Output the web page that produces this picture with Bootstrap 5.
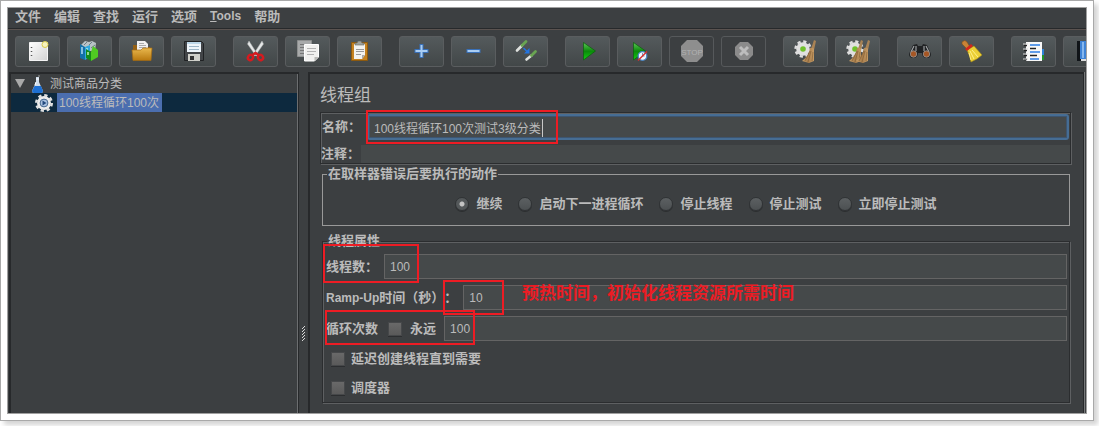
<!DOCTYPE html>
<html lang="zh-CN">
<head>
<meta charset="utf-8">
<meta name="viewport" content="width=device-width, initial-scale=1">
<title>线程组</title>
<link href="https://cdn.jsdelivr.net/npm/bootstrap@5.3.0/dist/css/bootstrap.min.css" rel="stylesheet">
<style>
:root{--panel:#3c3f41;--edge:#27292b;--lite:#5e6062;--ink:#bbb;--field:#45494a;--mark-red:#ed1c24}
body{background:#fff;font:12px/18px "Liberation Sans","Noto Sans CJK SC",sans-serif;color:var(--ink);text-spacing-trim:space-all}
.frame{margin:0 5px 5px 0;padding:6px;border:1px solid #a9a9a9;background:#fff;box-shadow:4px 4px 5px #d4d4d4}
.app{border:1px solid #a0a0a0;background:var(--panel);overflow:hidden}
.menubar{height:20px;padding:0 7px;gap:13px;font-size:13px;line-height:17px;font-weight:700;background:var(--panel)}
.menubar a{color:var(--ink);text-decoration:none;white-space:nowrap}
.latin{font-size:12px}
.toolbar{height:44px;padding:7px 7px 0;gap:17px;border-top:1px solid #27292b;overflow:hidden;box-shadow:inset 0 1px 0 #5b5350}
.tool-set{gap:7px}
.tool{width:45px;height:31px;padding:0;border:1px solid #5a5d5f;border-radius:3px;background:linear-gradient(#545a5c,#424748);display:flex;align-items:center;justify-content:center;flex:none}
.tool:disabled{background:var(--panel);border-color:#56595b}
.tool svg{width:25px;height:25px;flex:none}
.tree{flex:0 0 290px;margin-left:1px;border:2px solid var(--edge);border-width:2px 1px 0 2px;box-shadow:inset -1px 0 0 #6c6e70}
.tree ul{margin:0;padding:0 1px 0 0;list-style:none}
.node{height:19px;line-height:20px;font-size:12px}
.node-root{padding-left:4px}
.node-root .flask{margin:0 6px 0 6px}
.node-sel{background:#0d293e;padding-left:24px}
.node-sel .node-name{background:#4b6eaf;height:19px;padding:0 3px 0 2px;margin-left:4px}
.splitter{flex:0 0 9px;padding-top:180px}
.editor{border:2px solid var(--edge);border-width:2px 1px 0 2px;margin-right:2px;padding:10px 12px 10px 10px;box-shadow:1px 0 0 #77797a;min-width:0}
.editor h1{font-size:17px;line-height:24px;font-weight:400;margin:0 0 4px}
.etched{border:1px solid #2b2d2f;box-shadow:1px 1px 0 var(--lite),inset 1px 1px 0 var(--lite)}
label,legend,.lbl{font-size:13px;font-weight:700;line-height:18px;white-space:nowrap}
.field{flex:1 1 0;min-width:0;height:25px;background:var(--field);border:1px solid #646464;border-radius:0;color:var(--ink);padding:0 5px;font-size:12px;line-height:18px;outline:0}
.field-name{height:26px;border:2px solid #466d94;border-radius:3px;box-shadow:inset 0 0 0 1px #3d5570}
.field-note{height:18px;border:0}
.name-row{margin-top:1px;padding:0 1px}
.name-row label{width:45px}
.note-row{margin-top:5px}
.note-row label{width:40px}
fieldset.box{margin:0 1px 0 2px}
fieldset.props-box{margin-top:5px}
fieldset legend{float:none;width:auto;margin:0 0 0 4px;padding:0 1px;line-height:20px}
.on-error{border:1px solid #999}
.choices{gap:16px;padding:11px 0 12px}
.choices label,.check-row{display:flex;align-items:center;gap:7px}
input[type=radio],input[type=checkbox]{appearance:none;flex:none;width:14px;height:14px;margin:0;background:linear-gradient(#5c6062,#4c5052);border:1px solid #303335;box-shadow:0 1px 0 #2c2e30}
input[type=radio]{border-radius:50%}
input[type=radio]:checked{background:radial-gradient(circle,#c4c4c4 0 2px,#54585a 3px)}
input[type=checkbox]{background:linear-gradient(#696969,#5a5a5a);border-color:#46484a}
.props{padding:3px 2px 0 3px}
.prop-row{gap:6px;margin-bottom:6px}
.loop-row{gap:8px;padding-left:0}
.loop-row .lbl{margin-right:2px}
.checks{padding-top:3px}
.check-row{height:29px;padding-left:5px;gap:6px}
.ring{position:absolute;border:2px solid var(--mark-red);pointer-events:none}
.ring-name{left:45px;top:-4px;width:192px;height:34px}
.caret{position:absolute;left:221px;top:5px;width:1px;height:18px;background:#c8c8c8}
.ring-threads{left:-3px;top:-10px;width:96px;height:39px}
.ring-ramp{left:117px;top:-5px;width:61px;height:35px}
.ring-loop{left:-1px;top:-6px;width:150px;height:35px}
.remark{position:absolute;left:196px;top:-2px;font-size:17px;line-height:22px;font-weight:700;color:var(--mark-red);white-space:nowrap}
</style>
</head>
<body>
<svg width="0" height="0" class="position-absolute" aria-hidden="true">
<defs>
<linearGradient id="gGreen" x1="0" y1="0" x2="0" y2="1"><stop offset="0" stop-color="#5fc95a"/><stop offset=".5" stop-color="#0b8a0b"/><stop offset="1" stop-color="#12d012"/></linearGradient>
<linearGradient id="gGold" x1="0" y1="0" x2="0" y2="1"><stop offset="0" stop-color="#e9b84e"/><stop offset="1" stop-color="#b9790f"/></linearGradient>
<linearGradient id="gPaper" x1="0" y1="0" x2="1" y2="1"><stop offset="0" stop-color="#fff"/><stop offset="1" stop-color="#d2d2d2"/></linearGradient>
<linearGradient id="gBroom" x1="0" y1="0" x2="1" y2="0"><stop offset="0" stop-color="#c9a06a"/><stop offset=".5" stop-color="#a77d4c"/><stop offset="1" stop-color="#c69b65"/></linearGradient>
<g id="cog"><circle r="7.500" fill="none" stroke="#dedede" stroke-width="2.400" stroke-dasharray="3.200 2.690"/><circle r="6.800" fill="#e0e0e0"/><circle r="2.800" fill="#6fc02c"/></g>
<g id="besom"><path d="M11 0l2 1-2 9-3-1z" fill="#a98355"/><path d="M7 8q3-1 4 1l0 12-5 2-7-2q7-5 8-13z" fill="url(#gBroom)"/><path d="M7 11l-5 10M8 11l-3 11M10 12l-1 9" stroke="#7e5a31" stroke-width=".6"/></g>
</defs>
</svg>
<div class="frame">
<div class="app">
<nav class="menubar d-flex" aria-label="菜单">
<a href="#">文件</a><a href="#">编辑</a><a href="#">查找</a><a href="#">运行</a><a href="#">选项</a><a href="#" class="latin"><u>T</u>ools</a><a href="#">帮助</a>
</nav>
<div class="toolbar d-flex">
<div class="tool-set d-flex">
<button class="tool" type="button" aria-label="新建"><svg viewBox="0 0 25 25"><path d="M4.500 3.500h18v18h-18z" fill="url(#gPaper)" stroke="#f4f4f4"/><path d="M6.500 8v1M6.500 12v1M6.500 16v1" stroke="#555" stroke-width="1.500"/><circle cx="20" cy="5.500" r="3" fill="#f7f3bd" stroke="#d9cb4d" stroke-width="1"/></svg></button>
<button class="tool" type="button" aria-label="模板"><svg viewBox="0 0 25 25"><path d="M4 6l4-4 4 1 3-1 4 2-1 8H6z" fill="#b9c2c6"/><path d="M7 6l3-3M12 6l3-3M14 9l4-3" stroke="#6e7d85"/><path d="M3 5l5 3v13l-5-2z" fill="#1470a8"/><path d="M8 8l5-2v12l-5 3z" fill="#2fa9dd"/><path d="M5 8v7M10 9v5" stroke="#bfeaff" stroke-width="1.300"/><path d="M9 10l5 3v9l-5-3z" fill="#128a1a"/><path d="M14 13l2-6 5 4v7l-7 4z" fill="#50ca22"/><path d="M11 13v3" stroke="#d7ffd0" stroke-width="1.300"/></svg></button>
<button class="tool" type="button" aria-label="打开"><svg viewBox="0 0 25 25"><path d="M4 6h6l1 2h10v11H4z" fill="#946014"/><path d="M8 2h8l3 3v9H8z" fill="#f1f1f1"/><path d="M10 4.500h5M10 6.500h7M10 8.500h7" stroke="#999" stroke-width=".8"/><path d="M3 11h9l2-2h9l-1 12.500H4z" fill="url(#gGold)" stroke="#a56c11" stroke-width=".7"/></svg></button>
<button class="tool" type="button" aria-label="保存"><svg viewBox="0 0 25 25"><path d="M3.500 2.500h17l2 2v17h-19z" fill="#424548" stroke="#202224"/><path d="M6 3h14v10H6z" fill="#eef5fa"/><path d="M6 3h14v2H6z" fill="#bdd8ea"/><path d="M8 7.500h10M8 10.500h10" stroke="#9cb6c8"/><path d="M7 15h12v7H7z" fill="#d0d0ca"/><path d="M9 17h4v4H9z" fill="#333"/></svg></button>
</div>
<div class="tool-set d-flex">
<button class="tool" type="button" aria-label="剪切"><svg viewBox="0 0 25 25"><path d="M6 2l9 14-2 1L4.500 5zM19 2l-9 14 2 1 8.500-12z" fill="#e5e7e7" stroke="#aeb3b3" stroke-width=".5"/><g fill="none" stroke="#d61a1f" stroke-width="2.400"><ellipse cx="7.500" cy="18.500" rx="2.500" ry="2.700" transform="rotate(35 7.500 18.500)"/><ellipse cx="17.500" cy="18.500" rx="2.500" ry="2.700" transform="rotate(-35 17.500 18.500)"/><path d="M9.500 16l3-2 3 2"/></g></svg></button>
<button class="tool" type="button" aria-label="复制"><svg viewBox="0 0 25 25"><path d="M2.500 1.500h14v16h-14z" fill="#a8aaaa" stroke="#8d8f8f"/><path d="M5 5.500h8M5 8.500h5M5 11.500h5M5 14.500h5" stroke="#777"/><path d="M9.500 5.500h14v12.500l-4 4h-10z" fill="#f1f1ef" stroke="#fff"/><path d="M19.500 22v-4h4z" fill="#b9b9b5"/><path d="M12 9.500h9M12 12.500h9M12 15.500h7" stroke="#b3b3b3"/></svg></button>
<button class="tool" type="button" aria-label="粘贴"><svg viewBox="0 0 25 25"><path d="M4.500 3.500h16v18h-16z" fill="#c58220" stroke="#8d5a0f"/><path d="M7 5h11v11l-3 4H7z" fill="#f2f2f0"/><path d="M15 20v-4h3z" fill="#aaa"/><path d="M9 10.500h8M9 12.500h8M9 15.500h5" stroke="#999"/><path d="M8 6V4h2l1-2h3l1 2h2v2z" fill="#a0a39e" stroke="#62655f" stroke-width=".6"/></svg></button>
</div>
<div class="tool-set d-flex">
<button class="tool" type="button" aria-label="展开"><svg viewBox="0 0 25 25"><path d="M12.500 5v14M5.500 12h14" stroke="#3970b8" stroke-width="4"/><path d="M12.500 6v12M6.500 12h12" stroke="#a9cdf3" stroke-width="2"/></svg></button>
<button class="tool" type="button" aria-label="折叠"><svg viewBox="0 0 25 25"><path d="M5.500 12h14" stroke="#3970b8" stroke-width="4"/><path d="M6.500 12h12" stroke="#a9cdf3" stroke-width="2"/></svg></button>
<button class="tool" type="button" aria-label="切换"><svg viewBox="0 0 25 25"><g stroke-linecap="round"><path d="M4 11.500l5-5M13.500 20.500l5-4" stroke="#dfe2df" stroke-width="2.600"/><path d="M9 6.500l4-4M18.500 16.500l4-4" stroke="#69a552" stroke-width="2.800"/></g><path d="M10.500 9l4 4" stroke="#2374e0" stroke-width="1.500"/><path d="M16.500 9v5.500h-5.500z" fill="#2374e0"/></svg></button>
</div>
<div class="tool-set d-flex">
<button class="tool" type="button" aria-label="启动"><svg viewBox="0 0 25 25"><path d="M8.500 3.500l12 8.500-12 9z" fill="url(#gGreen)" stroke="#086008" stroke-width=".7"/></svg></button>
<button class="tool" type="button" aria-label="不停顿启动"><svg viewBox="0 0 25 25"><path d="M6.500 3.500l12 8.500-12 9z" fill="url(#gGreen)" stroke="#086008" stroke-width=".7"/><circle cx="15.500" cy="17" r="4.300" fill="#f2f7ff" stroke="#4c87c5" stroke-width="1.300"/><path d="M15.500 14v3h2" stroke="#7799bb" fill="none"/><path d="M11 21.500l9-9" stroke="#d93030" stroke-width="1.500"/></svg></button>
<button class="tool" type="button" disabled aria-label="停止"><svg viewBox="0 0 25 25"><path d="M8 1h10l6 6v10l-6 6H8l-6-6V7z" fill="#8e8e8e"/><text x="13" y="15.500" text-anchor="middle" font-family="Liberation Sans" font-size="8" fill="#b2b2b2">STOP</text></svg></button>
<button class="tool" type="button" disabled aria-label="关闭"><svg viewBox="0 0 25 25"><path d="M9 3h8l5 5v8l-5 5H9l-5-5V8z" fill="#8b8b8b"/><path d="M9 8l8 8M17 8l-8 8" stroke="#bdbdbd" stroke-width="3"/></svg></button>
</div>
<div class="tool-set d-flex">
<button class="tool" type="button" aria-label="清除"><svg viewBox="0 0 25 25"><use href="#cog" x="10" y="10"/><use href="#besom" x="10" y="1"/></svg></button>
<button class="tool" type="button" aria-label="清除全部"><svg viewBox="0 0 25 25"><use href="#cog" x="10" y="10"/><use href="#besom" x="5" y="1"/><use href="#besom" x="12" y="1"/></svg></button>
</div>
<div class="tool-set d-flex">
<button class="tool" type="button" aria-label="搜索"><svg viewBox="0 0 25 25"><path d="M6 6l4-1 1 2h4l1-2 4 1 4 9q0 4-4 4-5 0-5-5h-4q0 5-5 5-4 0-4-4z" fill="#202224"/><path d="M7 7l-3 6M9 7v5M19 7l3 6M17 7v5" stroke="#a5a8aa" stroke-width="1.100"/><circle cx="6.500" cy="15" r="3.200" fill="#a65725" stroke="#999" stroke-width=".8"/><circle cx="19.500" cy="15" r="3.200" fill="#a65725" stroke="#999" stroke-width=".8"/></svg></button>
<button class="tool" type="button" aria-label="重置搜索"><svg viewBox="0 0 25 25"><path d="M3 3q3-3 5 0l3 5-3 2-5-5z" fill="#c98336" stroke="#80501a" stroke-width=".6"/><path d="M8 11l7-4 8 9q-4 4-11 7-1-6-4-12z" fill="#ebcf35" stroke="#a68b14" stroke-width=".6"/><path d="M11 12l4 8M13 11l6 7M10 14l2 7" stroke="#fff08a" stroke-width="1"/><path d="M6 10l6-5 2 2-6 5z" fill="#d3261b"/></svg></button>
</div>
<div class="tool-set d-flex">
<button class="tool" type="button" aria-label="函数助手"><svg viewBox="0 0 25 25"><path d="M19 10h4v6h-4z" fill="#2f83d8"/><path d="M19 16h4v5h-4z" fill="#20932b"/><path d="M5 3h16v19H5z" fill="#f8f8f8"/><path d="M9 6h10M9 13h10M9 20h9" stroke="#2c7de4" stroke-width="1.300"/><path d="M9 9.500h6M9 16.500h7" stroke="#222" stroke-width="1.300"/><path d="M3 6.500h3M3 11.500h3M3 16.500h3M3 20.500h3" stroke="#222" stroke-width="1.600"/><path d="M2 5h5M2 10h5M2 15h5M2 20h5" stroke="#ddd"/></svg></button>
<button class="tool" type="button" aria-label="帮助"><svg viewBox="0 0 25 25"><path d="M4 2h4v20H4z" fill="#101418"/><path d="M7 2h15v18H7z" fill="#3f83d6"/><path d="M9 3h2v16H9z" fill="#86b7ee"/><path d="M8 20h14v2H8z" fill="#ddd"/></svg></button>
</div>
</div>
<main class="d-flex">
<aside class="tree">
<ul>
<li class="node node-root d-flex align-items-center">
<svg width="10" height="9" viewBox="0 0 10 9"><path d="M0 0h10L5 9z" fill="#a9a9a9"/></svg>
<svg class="flask" width="13" height="18" viewBox="0 0 13 18"><path d="M5 2h3v5l4 9q0 2-2 2H3q-2 0-2-2l4-9z" fill="#cfdcea"/><path d="M3.500 11h6.500l2 5q0 2-2 2H3q-2 0-2-2z" fill="#1d6fd2"/><path d="M5 4h3M5 7l-1 3" stroke="#fff"/><path d="M8 0v2" stroke="#999"/></svg>
<span>测试商品分类</span>
</li>
<li class="node node-sel d-flex align-items-center">
<svg width="18" height="18" viewBox="0 0 18 18"><circle cx="9" cy="9" r="7.800" fill="none" stroke="#e0e0e0" stroke-width="2.400" stroke-dasharray="3.300 2.826"/><circle cx="9" cy="9" r="7" fill="#ececec"/><circle cx="9" cy="9" r="3.900" fill="#a9c1e0" stroke="#45688f"/><path d="M7.500 6.500l4 2.500-4 2.500z" fill="#244a7d"/></svg>
<span class="node-name">100线程循环100次</span>
</li>
</ul>
</aside>
<div class="splitter d-flex align-items-center justify-content-center">
<svg width="5" height="16" viewBox="0 0 5 16"><path d="M1 4l3-3M1 7l3-3M1 10l3-3M1 13l3-3M1 16l3-3" stroke="#d8d8d8" stroke-width="1"/></svg>
</div>
<section class="editor flex-grow-1">
<h1>线程组</h1>
<div class="etched">
<div class="name-row d-flex align-items-center position-relative">
<label for="tgName">名称：</label><input id="tgName" class="field field-name" type="text" value="100线程循环100次测试3级分类">
<span class="caret"></span><span class="ring ring-name"></span>
</div>
<div class="note-row d-flex align-items-center"><label for="tgNote">注释：</label><input id="tgNote" class="field field-note" type="text"></div>
</div>
<fieldset class="box on-error">
<legend>在取样器错误后要执行的动作</legend>
<div class="choices d-flex justify-content-center">
<label><input type="radio" name="act" checked>继续</label>
<label><input type="radio" name="act">启动下一进程循环</label>
<label><input type="radio" name="act">停止线程</label>
<label><input type="radio" name="act">停止测试</label>
<label><input type="radio" name="act">立即停止测试</label>
</div>
</fieldset>
<fieldset class="box etched props-box">
<legend>线程属性</legend>
<div class="props">
<div class="prop-row d-flex align-items-center position-relative"><label for="threads">线程数：</label><input id="threads" class="field" type="text" value="100"><span class="ring ring-threads"></span></div>
<div class="prop-row d-flex align-items-center position-relative"><label for="ramp"><span class="latin">Ramp-Up</span>时间（秒）：</label><input id="ramp" class="field" type="text" value="10"><span class="ring ring-ramp"></span><span class="remark">预热时间，初始化线程资源所需时间</span></div>
<div class="loop-row d-flex align-items-center position-relative"><span class="lbl">循环次数</span><input type="checkbox" id="forever"><label for="forever">永远</label><input class="field" type="text" aria-label="循环次数" value="100"><span class="ring ring-loop"></span></div>
<div class="checks">
<div class="check-row"><input type="checkbox" id="delay"><label for="delay">延迟创建线程直到需要</label></div>
<div class="check-row"><input type="checkbox" id="sched"><label for="sched">调度器</label></div>
</div>
</div>
</fieldset>
</section>
</main>
</div>
</div>
<script src="https://cdn.jsdelivr.net/npm/bootstrap@5.3.0/dist/js/bootstrap.bundle.min.js"></script>
</body>
</html>
